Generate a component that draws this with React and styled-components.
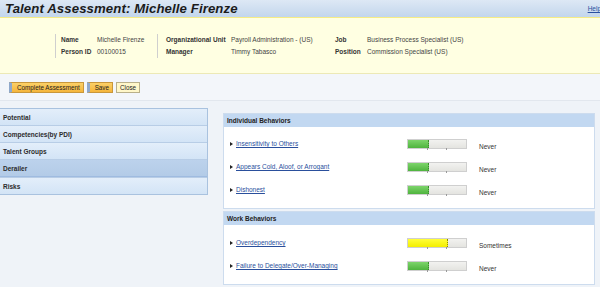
import React from "react";
import styled, { createGlobalStyle } from "styled-components";

const Global = createGlobalStyle`
  html, body { margin: 0; padding: 0; }
  body {
    background: #eff3f8;
    font-family: "Liberation Sans", Arial, sans-serif;
    color: #222;
    width: 600px;
    height: 287px;
    overflow: hidden;
  }
`;

const Page = styled.div`
  width: 600px;
  height: 287px;
  display: flex;
  flex-direction: column;
  background: #eff3f8;
`;

const TitleBar = styled.div`
  height: 17px;
  display: flex;
  align-items: center;
  justify-content: space-between;
  padding: 0 0 0 5px;
  background: linear-gradient(#dde8f5, #c3d6ec);
  border-bottom: 1px solid #f6ec86;
`;

const Title = styled.h1`
  margin: 0;
  font-size: 13.2px;
  font-weight: bold;
  font-style: italic;
  color: #1b1b1b;
  letter-spacing: 0.1px;
`;

const HelpLink = styled.a`
  font-size: 6.5px;
  color: #2a4fa0;
  text-decoration: underline;
  margin-right: -1px;
  align-self: flex-start;
  margin-top: 5px;
`;

const InfoBar = styled.div`
  height: 55px;
  background: #ffffe2;
  border-bottom: 1px solid #ece9b6;
  display: flex;
  align-items: center;
  padding-left: 55px;
`;

const InfoGroup = styled.div`
  display: grid;
  grid-template-columns: ${(p) => p.$label}px auto;
  row-gap: 5px;
  align-content: center;
  height: 24px;
  padding-left: ${(p) => p.$pad}px;
  border-left: ${(p) => (p.$sep ? "1px solid #cfcfcf" : "none")};
  width: ${(p) => p.$w}px;
  font-size: 6.5px;
`;

const InfoLabel = styled.span`
  font-weight: bold;
  color: #333;
`;

const InfoValue = styled.span`
  color: #444;
  white-space: nowrap;
`;

const Toolbar = styled.div`
  height: 26px;
  display: flex;
  align-items: center;
  gap: 3px;
  padding-left: 9px;
  border-bottom: 1px solid #e2e7ee;
  background: #f3f6fa;
`;

const Button = styled.button`
  height: 11px;
  padding: 0 3px 0 ${(p) => (p.$accent ? 5 : 3)}px;
  font-family: "Liberation Sans", Arial, sans-serif;
  font-size: 6.3px;
  color: #222;
  line-height: 9px;
  border: 1px solid ${(p) => (p.$primary ? "#c9973a" : "#b9b08a")};
  border-left: ${(p) => (p.$accent ? "3px solid #8fa9cc" : undefined)};
  background: ${(p) => (p.$primary ? "linear-gradient(#fbd067, #f5b53a)" : "#fff7c9")};
  border-radius: 0;
  cursor: pointer;
`;

const Content = styled.div`
  flex: 1;
  display: flex;
  gap: 15px;
  padding-top: 7px;
  align-items: flex-start;
`;

const Nav = styled.nav`
  width: 207px;
  display: flex;
  flex-direction: column;
  border: 1px solid #a9c2df;
  border-left: none;
`;

const NavItem = styled.div`
  height: 16px;
  display: flex;
  align-items: center;
  padding-left: 3px;
  font-size: 6.5px;
  font-weight: bold;
  color: #2b2b2b;
  background: ${(p) => (p.$active ? "linear-gradient(#bcd2ec, #b3cbe7)" : "linear-gradient(#e3eefa, #d3e4f6)")};
  border-top: ${(p) => (p.$first ? "none" : "1px solid #b8cde6")};
  border-bottom: ${(p) => (p.$active ? "1px solid #9fbbe0" : "none")};
`;

const Main = styled.div`
  width: 372px;
  display: flex;
  flex-direction: column;
  gap: 2px;
  padding-top: 5px;
`;

const Panel = styled.section`
  border: 1px solid #cddcee;
  background: #fff;
`;

const PanelHeader = styled.div`
  height: 13px;
  display: flex;
  align-items: center;
  padding-left: 3px;
  background: #c2d8f1;
  font-size: 6.5px;
  font-weight: bold;
  color: #222;
`;

const PanelBody = styled.div`
  display: flex;
  flex-direction: column;
  gap: ${(p) => p.$gap}px;
  padding: ${(p) => p.$pad};
`;

const Row = styled.div`
  display: grid;
  grid-template-columns: 12px 165px 60px auto;
  align-items: center;
  height: 10px;
  padding-left: 6px;
`;

const Arrow = styled.span`
  width: 0;
  height: 0;
  border-top: 2.5px solid transparent;
  border-bottom: 2.5px solid transparent;
  border-left: 3px solid #222;
`;

const Link = styled.a`
  font-size: 6.5px;
  color: #2a4f9c;
  text-decoration: underline;
  white-space: nowrap;
  margin-left: -6px;
`;

const Bar = styled.div`
  position: relative;
  height: 10px;
  box-sizing: border-box;
  border: 1px solid #cfcfcf;
  background: linear-gradient(#f2f2f0, #e4e4e0);
`;

const BarFill = styled.div`
  height: 100%;
  background: ${(p) => p.$color};
  border-right: 1px dotted ${(p) => p.$edge};
`;

const Tick = styled.span`
  position: absolute;
  bottom: -2px;
  width: 1px;
  height: 2px;
  background: #999;
`;

const Rating = styled.span`
  font-size: 6.5px;
  color: #333;
  padding-left: 12px;
  margin-top: 6px;
`;

const levels = {
  Never: { pct: 34, color: "linear-gradient(#7dd46b, #4fb43e)", edge: "#3a8a2c" },
  Sometimes: { pct: 67, color: "linear-gradient(#ffff3a, #f3ee00)", edge: "#8a8a00" },
};

function Behavior({ name, level }) {
  const l = levels[level];
  return (
    <Row>
      <Arrow />
      <Link href="#">{name}</Link>
      <Bar>
        <BarFill $color={l.color} $edge={l.edge} style={{ width: `${l.pct}%` }} />
        <Tick style={{ left: "33%" }} />
        <Tick style={{ left: "66%" }} />
      </Bar>
      <Rating>{level}</Rating>
    </Row>
  );
}

export default function App() {
  return (
    <Page>
      <Global />
      <TitleBar>
        <Title>Talent Assessment: Michelle Firenze</Title>
        <HelpLink href="#">Help</HelpLink>
      </TitleBar>
      <InfoBar>
        <InfoGroup $sep $pad={5} $label={36} $w={96}>
          <InfoLabel>Name</InfoLabel>
          <InfoValue>Michelle Firenze</InfoValue>
          <InfoLabel>Person ID</InfoLabel>
          <InfoValue>00100015</InfoValue>
        </InfoGroup>
        <InfoGroup $sep $pad={8} $label={65} $w={169}>
          <InfoLabel>Organizational Unit</InfoLabel>
          <InfoValue>Payroll Administration - (US)</InfoValue>
          <InfoLabel>Manager</InfoLabel>
          <InfoValue>Timmy Tabasco</InfoValue>
        </InfoGroup>
        <InfoGroup $pad={0} $label={32} $w={200}>
          <InfoLabel>Job</InfoLabel>
          <InfoValue>Business Process Specialist (US)</InfoValue>
          <InfoLabel>Position</InfoLabel>
          <InfoValue>Commission Specialist (US)</InfoValue>
        </InfoGroup>
      </InfoBar>
      <Toolbar>
        <Button $primary $accent>Complete Assessment</Button>
        <Button $primary $accent>Save</Button>
        <Button>Close</Button>
      </Toolbar>
      <Content>
        <Nav>
          <NavItem $first>Potential</NavItem>
          <NavItem>Competencies(by PDI)</NavItem>
          <NavItem>Talent Groups</NavItem>
          <NavItem $active>Derailer</NavItem>
          <NavItem>Risks</NavItem>
        </Nav>
        <Main>
          <Panel>
            <PanelHeader>Individual Behaviors</PanelHeader>
            <PanelBody $gap={13} $pad="10px 0 15px">
              <Behavior name="Insensitivity to Others" level="Never" />
              <Behavior name="Appears Cold, Aloof, or Arrogant" level="Never" />
              <Behavior name="Dishonest" level="Never" />
            </PanelBody>
          </Panel>
          <Panel>
            <PanelHeader>Work Behaviors</PanelHeader>
            <PanelBody $gap={13} $pad="11px 0 15px">
              <Behavior name="Overdependency" level="Sometimes" />
              <Behavior name="Failure to Delegate/Over-Managing" level="Never" />
            </PanelBody>
          </Panel>
        </Main>
      </Content>
    </Page>
  );
}
